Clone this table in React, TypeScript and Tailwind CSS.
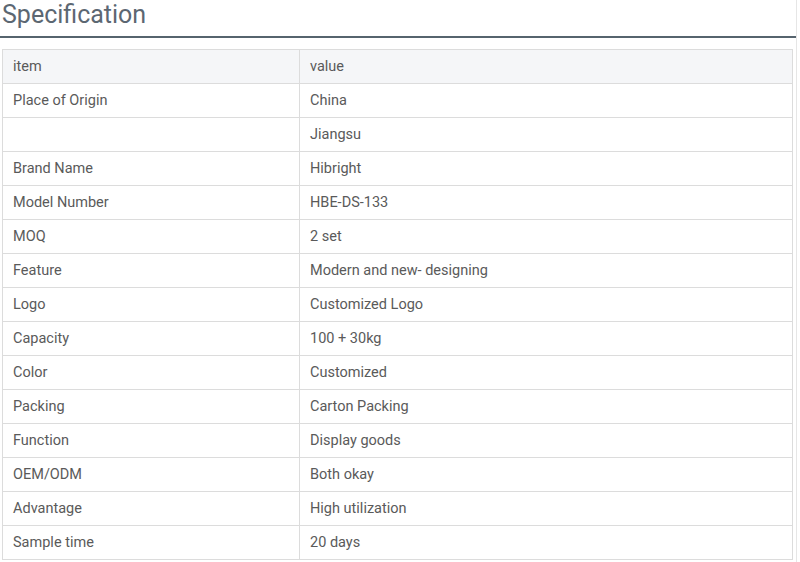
import React from "react";

const rows: [string, string][] = [
  ["Place of Origin", "China"],
  ["", "Jiangsu"],
  ["Brand Name", "Hibright"],
  ["Model Number", "HBE-DS-133"],
  ["MOQ", "2 set"],
  ["Feature", "Modern and new- designing"],
  ["Logo", "Customized Logo"],
  ["Capacity", "100 + 30kg"],
  ["Color", "Customized"],
  ["Packing", "Carton Packing"],
  ["Function", "Display goods"],
  ["OEM/ODM", "Both okay"],
  ["Advantage", "High utilization"],
  ["Sample time", "20 days"],
];

export default function App() {
  return (
    <div
      className="w-[800px] h-[562px] bg-white overflow-hidden"
      style={{ fontFamily: "Roboto, 'Liberation Sans', sans-serif" }}
    >
      <div className="w-[797px] border-r border-[#e6e6e6] h-full">
        <div className="h-[36px] pl-[2px] text-[25px] leading-[30px] text-[#5c6772]">Specification</div>
        <div className="h-[2px] bg-[#56646e]" />
        <div className="pt-[11px] pl-[2px] pr-[4px]">
          <table className="w-[791px] border-collapse text-[14.5px] text-[#5a5a5a] table-fixed">
            <colgroup>
              <col className="w-[297px]" />
              <col />
            </colgroup>
            <tbody>
              <tr className="h-[34px] bg-[#f5f6f8]">
                <td className="border border-[#dcdcdc] px-[10px]">item</td>
                <td className="border border-[#dcdcdc] px-[10px]">value</td>
              </tr>
              {rows.map(([a, b], i) => (
                <tr key={i} className="h-[34px]">
                  <td className="border border-[#dcdcdc] px-[10px]">{a}</td>
                  <td className="border border-[#dcdcdc] px-[10px]">{b}</td>
                </tr>
              ))}
            </tbody>
          </table>
        </div>
      </div>
    </div>
  );
}
